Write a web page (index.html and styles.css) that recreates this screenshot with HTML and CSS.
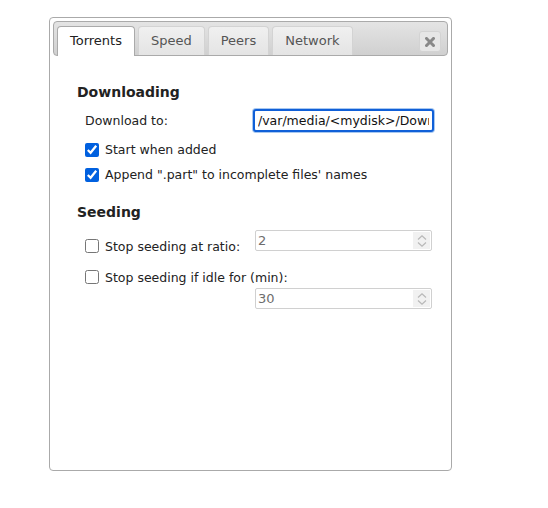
FILE: index.html
```html
<!DOCTYPE html>
<html lang="en">
<head>
    <meta charset="UTF-8">
    <title>Preferences</title>
    <link rel="stylesheet" href="styles.css">
</head>
<body>
    <div class="dialog">
        <div class="tab-bar">
            <ul class="tab-nav">
                <li class="tab active">Torrents</li>
                <li class="tab">Speed</li>
                <li class="tab">Peers</li>
                <li class="tab">Network</li>
            </ul>
            <button class="close" title="Close">
                <svg width="10" height="10" viewBox="0 0 10 10">
                    <path d="M1.5 1.5 L8.5 8.5 M8.5 1.5 L1.5 8.5" stroke="#888" stroke-width="3" stroke-linecap="square"/>
                </svg>
            </button>
        </div>

        <div class="panel">
            <h3>Downloading</h3>
            <div class="field-row">
                <label class="field-label" for="download-dir">Download to:</label>
                <input id="download-dir" class="path-input" type="text" value="/var/media/<mydisk>/Downloads">
            </div>
            <label class="check-row first"><input type="checkbox" checked>Start when added</label>
            <label class="check-row"><input type="checkbox" checked>Append ".part" to incomplete files' names</label>

            <h3 class="seeding">Seeding</h3>
            <div class="seed-grid">
                <label class="check-row ratio-label"><input type="checkbox">Stop seeding at ratio:</label>
                <div class="spin">
                    <input type="text" value="2" disabled>
                    <span class="spin-btns">
                        <svg width="10" height="5" viewBox="0 0 10 5"><path d="M1 4.5 L5 0.8 L9 4.5" fill="none" stroke="#b8b8b8" stroke-width="1.2"/></svg>
                        <svg width="10" height="5" viewBox="0 0 10 5"><path d="M1 0.5 L5 4.2 L9 0.5" fill="none" stroke="#b8b8b8" stroke-width="1.2"/></svg>
                    </span>
                </div>
                <label class="check-row idle-label"><input type="checkbox">Stop seeding if idle for (min):</label>
                <div class="spin idle-spin">
                    <input type="text" value="30" disabled>
                    <span class="spin-btns">
                        <svg width="10" height="5" viewBox="0 0 10 5"><path d="M1 4.5 L5 0.8 L9 4.5" fill="none" stroke="#b8b8b8" stroke-width="1.2"/></svg>
                        <svg width="10" height="5" viewBox="0 0 10 5"><path d="M1 0.5 L5 4.2 L9 0.5" fill="none" stroke="#b8b8b8" stroke-width="1.2"/></svg>
                    </span>
                </div>
            </div>
        </div>
    </div>
</body>
</html>
```

FILE: styles.css
```css
body {
    margin: 0;
    font-family: "DejaVu Sans", sans-serif;
    font-size: 12.5px;
    color: #222;
    background: #fff;
}

.dialog {
    box-sizing: border-box;
    width: 403px;
    height: 454px;
    margin: 17px 0 0 49px;
    padding: 3px;
    border: 1px solid #aaa;
    border-radius: 4px;
    background: #fff;
}

/* tab strip */
.tab-bar {
    display: flex;
    align-items: flex-start;
    height: 29px;
    padding: 4px 3px 0;
    border: 1px solid #aaa;
    border-radius: 4px;
    background: linear-gradient(#e4e4e4, #d0d0d0);
}

.tab-nav {
    display: flex;
    gap: 3px;
    margin: 0;
    padding: 0;
    list-style: none;
}

.tab {
    height: 28px;
    line-height: 28px;
    padding: 0 12px;
    border: 1px solid #d3d3d3;
    border-bottom: 0;
    border-radius: 4px 4px 0 0;
    background: linear-gradient(#f0f0f0, #e4e4e4);
    font-size: 13px;
    color: #555;
}

.tab.active {
    height: 29px;
    border-color: #aaa;
    background: #fff;
    color: #212121;
}

.close {
    display: flex;
    align-items: center;
    justify-content: center;
    width: 22px;
    height: 21px;
    margin: 5px 3px 0 auto;
    padding: 0;
    border: 1px solid #d3d3d3;
    border-radius: 3px;
    background: #e6e6e6;
}

/* panel content */
.panel {
    padding: 27px 0 0 24px;
}

h3 {
    margin: 0;
    font-size: 14px;
    line-height: 18px;
    font-weight: bold;
    color: #222;
}

h3.seeding {
    margin-top: 16px;
}

.field-row {
    display: flex;
    align-items: center;
    height: 25px;
    margin: 7px 0 0 8px;
}

.field-label {
    width: 167px;
}

.path-input {
    box-sizing: border-box;
    width: 181px;
    height: 23px;
    margin: 0 1px;
    padding: 0 3px;
    border: 2px solid #1060d8;
    border-radius: 3px;
    box-shadow: 0 0 0 1px #a8c8f0;
    outline: none;
    font: inherit;
    color: #111;
}

.check-row {
    display: flex;
    align-items: center;
    height: 25px;
    margin-left: 8px;
}

.check-row.first {
    margin-top: 4px;
}

.check-row input {
    width: 14px;
    height: 14px;
    margin: 0 6px 0 0;
    accent-color: #0060df;
}

.seed-grid {
    display: grid;
    grid-template-columns: 170px 177px;
    align-items: start;
    margin: 9px 0 0 8px;
}

.seed-grid .check-row {
    height: 16px;
    margin: 0;
}

.seed-grid .ratio-label {
    margin-top: 8px;
}

.seed-grid .idle-label {
    grid-column: 1 / 3;
    margin-top: 15px;
}

.idle-spin {
    grid-column: 2;
    margin-top: 3px;
}

/* disabled number fields */
.spin {
    box-sizing: border-box;
    display: flex;
    height: 21px;
    border: 1px solid #d0d0d0;
    border-radius: 2px;
    background: #fff;
}

.spin input {
    flex: 1;
    min-width: 0;
    padding: 0 2px;
    border: 0;
    background: transparent;
    font: inherit;
    font-size: 13px;
    color: #6d6d6d;
}

.spin-btns {
    display: flex;
    flex-direction: column;
    align-items: center;
    justify-content: center;
    gap: 2px;
    width: 17px;
    margin: 1px 1px 1px 0;
    background: #f1f1f1;
}
```
